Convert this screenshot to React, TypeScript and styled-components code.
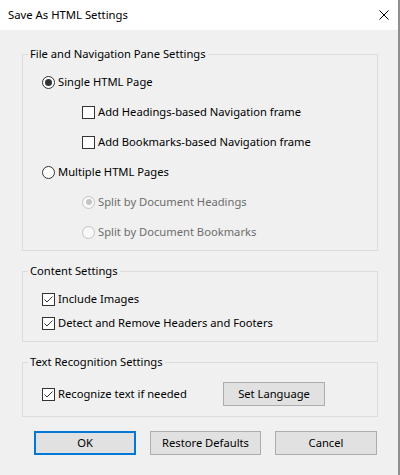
import React from 'react';
import styled, { createGlobalStyle } from 'styled-components';

const GlobalStyle = createGlobalStyle`
  html, body { margin: 0; padding: 0; }
  body {
    background: #f0f0f0;
    font-family: "Segoe UI", "Noto Sans", sans-serif;
    font-size: 11.2px;
    color: #000;
  }
  * { box-sizing: border-box; }
`;

const Window = styled.div`
  width: 400px;
  height: 475px;
  background: #f0f0f0;
  border-right: 2px solid #8f8f8f;
  display: flex;
  flex-direction: column;
  overflow: hidden;
`;

const TitleBar = styled.div`
  height: 30px;
  flex: 0 0 30px;
  background: #fff;
  display: flex;
  align-items: center;
  justify-content: space-between;
  padding: 0 9px 0 8px;
`;

const Title = styled.span`
  font-size: 11.3px;
  line-height: 16px;
`;

const CloseButton = styled.span`
  display: flex;
  width: 10px;
  height: 10px;
`;

const Body = styled.div`
  padding: 16px 20px 0 22px;
  display: flex;
  flex-direction: column;
  gap: 12px;
`;

const Group = styled.fieldset`
  margin: 0;
  padding: 0;
  border: 1px solid #dcdcdc;
  min-width: 0;
`;

const Legend = styled.legend`
  margin-left: 5px;
  padding: 0 2px;
  line-height: 16px;
  font-size: 11.2px;
`;

const GroupContent = styled.div<{ $gap: number }>`
  padding: 12px 0 10px 19px;
  display: flex;
  flex-direction: column;
  gap: ${(p) => p.$gap}px;
`;

const Option = styled.label<{ $indent?: number; $disabled?: boolean; $width?: number }>`
  display: flex;
  align-items: center;
  gap: 3px;
  height: 16px;
  line-height: 16px;
  margin-left: ${(p) => p.$indent ?? 0}px;
  color: ${(p) => (p.$disabled ? '#6d6d6d' : '#000')};
  white-space: nowrap;
  ${(p) => (p.$width ? `flex: 0 0 ${p.$width}px;` : '')}
`;

const CheckBox = styled.span<{ $disabled?: boolean }>`
  display: flex;
  flex: 0 0 13px;
  width: 13px;
  height: 13px;
  border: 1px solid ${(p) => (p.$disabled ? '#bcbcbc' : '#333')};
  background: #fff;
`;

const RadioCircle = styled.span<{ $disabled?: boolean }>`
  display: flex;
  align-items: center;
  justify-content: center;
  flex: 0 0 13px;
  width: 13px;
  height: 13px;
  border-radius: 50%;
  border: 1px solid ${(p) => (p.$disabled ? '#c4c4c4' : '#333')};
  background: ${(p) => (p.$disabled ? '#f8f8f8' : '#fff')};
`;

const RadioDot = styled.span<{ $disabled?: boolean }>`
  width: ${(p) => (p.$disabled ? 6 : 7)}px;
  height: ${(p) => (p.$disabled ? 6 : 7)}px;
  border-radius: 50%;
  background: ${(p) => (p.$disabled ? '#c4c4c4' : '#333')};
`;

const InlineRow = styled.div`
  display: flex;
  align-items: center;
`;

const Button = styled.button<{ $width: number; $default?: boolean }>`
  width: ${(p) => p.$width}px;
  height: 24px;
  padding: 0;
  margin: 0;
  background: #e1e1e1;
  border: ${(p) => (p.$default ? '2px solid #0078d7' : '1px solid #adadad')};
  font-family: inherit;
  font-size: 11.2px;
  color: #000;
  line-height: 16px;
`;

const ButtonRow = styled.div`
  display: flex;
  gap: 14px;
  padding-left: 34px;
  margin-top: 14px;
`;

type BoxProps = { label: string; checked?: boolean; disabled?: boolean; indent?: number; width?: number };

const Check = ({ label, checked, disabled, indent, width }: BoxProps) => (
  <Option $indent={indent} $disabled={disabled} $width={width}>
    <CheckBox $disabled={disabled}>
      {checked && (
        <svg width="11" height="11" viewBox="0 0 11 11">
          <polyline points="1.5,5.5 4,8 9.5,2.5" fill="none" stroke={disabled ? '#bcbcbc' : '#333'} strokeWidth="1" />
        </svg>
      )}
    </CheckBox>
    {label}
  </Option>
);

const Radio = ({ label, checked, disabled, indent }: BoxProps) => (
  <Option $indent={indent} $disabled={disabled}>
    <RadioCircle $disabled={disabled}>{checked && <RadioDot $disabled={disabled} />}</RadioCircle>
    {label}
  </Option>
);

export default function App() {
  return (
    <>
      <GlobalStyle />
      <Window>
        <TitleBar>
          <Title>Save As HTML Settings</Title>
          <CloseButton>
            <svg width="10" height="10" viewBox="0 0 10 10">
              <path d="M0.5 0.5 L9.5 9.5 M9.5 0.5 L0.5 9.5" stroke="#000" strokeWidth="1" fill="none" />
            </svg>
          </CloseButton>
        </TitleBar>
        <Body>
          <Group>
            <Legend>File and Navigation Pane Settings</Legend>
            <GroupContent $gap={14}>
              <Radio label="Single HTML Page" checked />
              <Check label="Add Headings-based Navigation frame" indent={40} />
              <Check label="Add Bookmarks-based Navigation frame" indent={40} />
              <Radio label="Multiple HTML Pages" />
              <Radio label="Split by Document Headings" checked disabled indent={40} />
              <Radio label="Split by Document Bookmarks" disabled indent={40} />
            </GroupContent>
          </Group>
          <Group>
            <Legend>Content Settings</Legend>
            <GroupContent $gap={8}>
              <Check label="Include Images" checked />
              <Check label="Detect and Remove Headers and Footers" checked />
            </GroupContent>
          </Group>
          <Group>
            <Legend>Text Recognition Settings</Legend>
            <GroupContent $gap={0}>
              <InlineRow>
                <Check label="Recognize text if needed" checked width={181} />
                <Button $width={102}>Set Language</Button>
              </InlineRow>
            </GroupContent>
          </Group>
        </Body>
        <ButtonRow>
          <Button $width={102} $default>OK</Button>
          <Button $width={111}>Restore Defaults</Button>
          <Button $width={102}>Cancel</Button>
        </ButtonRow>
      </Window>
    </>
  );
}
